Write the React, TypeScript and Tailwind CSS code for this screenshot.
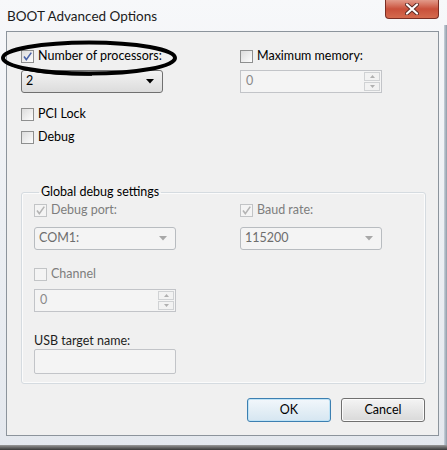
import clsx from "clsx";

const font = "font-['Lato',sans-serif]";

const Check = ({ checked, disabled }: { checked?: boolean; disabled?: boolean }) => (
  <span
    className={clsx(
      "w-[13px] h-[13px] shrink-0 border flex items-center justify-center",
      disabled
        ? "border-[#c2c4c6] bg-[#f4f4f4]"
        : "border-[#8e8f8f] bg-linear-to-br from-[#dcdcdc] to-[#fdfdfd]"
    )}
  >
    {checked && (
      <svg width="11" height="11" viewBox="0 0 11 11">
        <path
          d="M2 5.5 L4.3 8.6 L9.3 1.6"
          fill="none"
          stroke={disabled ? "#b4b4b4" : "#4a64a8"}
          strokeWidth="1.6"
        />
      </svg>
    )}
  </span>
);

const CheckRow = ({
  label,
  checked,
  disabled,
}: {
  label: string;
  checked?: boolean;
  disabled?: boolean;
}) => (
  <div className="flex items-center gap-[4px] h-[13px]">
    <Check checked={checked} disabled={disabled} />
    <span className={clsx("text-[12.5px] leading-none", disabled ? "text-[#7d7d7d]" : "text-black")}>
      {label}
    </span>
  </div>
);

const Combo = ({ value, disabled }: { value: string; disabled?: boolean }) => (
  <div
    className={clsx(
      "w-[142px] h-[23px] rounded-[3px] border flex items-center justify-between pl-[4px] pr-[8px]",
      disabled
        ? "border-[#b8bcc0] bg-[#f4f4f4] text-[#6d6d6d]"
        : "border-[#707070] bg-linear-to-b from-[#f3f3f3] to-[#dcdcdc] text-black"
    )}
  >
    <span className="text-[12.5px] leading-none">{value}</span>
    <svg width="8" height="5" viewBox="0 0 8 5">
      <path d="M0 0 H8 L4 4.5 Z" fill={disabled ? "#a8a8a8" : "#000"} />
    </svg>
  </div>
);

const Spinner = ({ value }: { value: string }) => (
  <div className="w-[142px] h-[23px] border border-[#c2c4c8] bg-[#f4f4f4] flex items-center justify-between pl-[5px] pr-[1px]">
    <span className="text-[12.5px] leading-none text-[#8a8a8a]">{value}</span>
    <div className="flex flex-col gap-[1px]">
      {[0, 1].map((i) => (
        <div
          key={i}
          className="w-[16px] h-[9px] border border-[#d0d2d4] bg-[#f2f2f2] flex items-center justify-center"
        >
          <svg width="5" height="3" viewBox="0 0 5 3">
            <path d={i === 0 ? "M0 3 H5 L2.5 0 Z" : "M0 0 H5 L2.5 3 Z"} fill="#b0b0b0" />
          </svg>
        </div>
      ))}
    </div>
  </div>
);

const Button = ({ label, focused }: { label: string; focused?: boolean }) => (
  <div
    className={clsx(
      "w-[84px] h-[24px] rounded-[3px] border flex items-center justify-center text-[12.5px] text-black",
      focused
        ? "border-[#3c7fb1] bg-linear-to-b from-[#f2f7fb] to-[#d6e6f1] shadow-[inset_0_0_0_1px_#bfe3f6]"
        : "border-[#707070] bg-linear-to-b from-[#f4f4f4] to-[#d9d9d9] shadow-[inset_0_0_0_1px_#fbfbfb]"
    )}
  >
    {label}
  </div>
);

export default function App() {
  return (
    <div
      className={clsx(
        "relative w-[447px] h-[450px] bg-linear-to-b from-[#f7f8fa] via-[#eceff3] to-[#e4e8ee] flex flex-col",
        font
      )}
    >
      {/* title bar */}
      <div className="h-[31px] flex items-start justify-between pl-[7px] pr-[8px]">
        <span className="mt-[6px] text-[13.5px] text-[#1b1b1b]">BOOT Advanced Options</span>
        <div className="w-[54px] h-[19px] rounded-b-[4px] border border-t-0 border-[#7a2e24] bg-linear-to-b from-[#e29a8a] via-[#c9503b] to-[#d46a4e] flex items-center justify-center">
          <svg width="14" height="12" viewBox="0 0 14 12">
            <path d="M2 1.5 L12 10.5 M12 1.5 L2 10.5" stroke="#5a2a24" strokeWidth="4" strokeLinecap="round" />
            <path d="M2 1.5 L12 10.5 M12 1.5 L2 10.5" stroke="#fff" strokeWidth="2.2" strokeLinecap="round" />
          </svg>
        </div>
      </div>

      {/* client area */}
      <div className="ml-[6px] w-[433px] h-[405px] border border-[#8c949c] bg-[#f0f0f0] pl-[14px] pt-[18px]">
        <div className="flex">
          <div className="w-[219px] flex flex-col">
            <CheckRow label="Number of processors:" checked />
            <div className="mt-[7px]">
              <Combo value="2" />
            </div>
            <div className="mt-[15px] flex flex-col gap-[10px]">
              <CheckRow label="PCI Lock" />
              <CheckRow label="Debug" />
            </div>
          </div>
          <div className="flex flex-col">
            <CheckRow label="Maximum memory:" />
            <div className="mt-[7px]">
              <Spinner value="0" />
            </div>
          </div>
        </div>

        <fieldset className="mt-[41px] w-[405px] h-[199px] border border-[#d5dbe0] rounded-[3px] pl-[12px] shadow-[inset_0_0_0_1px_#fbfbfb]">
          <legend className="ml-[5px] px-[2px] text-[12.5px] leading-[14px] text-black">
            Global debug settings
          </legend>
          <div className="mt-[5px] flex">
            <div className="w-[206px] flex flex-col">
              <CheckRow label="Debug port:" checked disabled />
              <div className="mt-[10px]">
                <Combo value="COM1:" disabled />
              </div>
              <div className="mt-[18px]">
                <CheckRow label="Channel" disabled />
              </div>
              <div className="mt-[8px]">
                <Spinner value="0" />
              </div>
              <span className="mt-[22px] text-[12.5px] leading-[14px] text-[#1e1e1e]">USB target name:</span>
              <div className="mt-[1px] w-[142px] h-[25px] rounded-[2px] border border-[#c2c4c8] bg-[#f4f4f4]" />
            </div>
            <div className="flex flex-col">
              <CheckRow label="Baud rate:" checked disabled />
              <div className="mt-[10px]">
                <Combo value="115200" disabled />
              </div>
            </div>
          </div>
        </fieldset>

        <div className="mt-[14px] w-[404px] flex justify-end gap-[10px]">
          <Button label="OK" focused />
          <Button label="Cancel" />
        </div>
      </div>

      <div className="mt-auto h-[5px] bg-linear-to-b from-[#9a9a9a] to-[#3a3a3a]" />
      <div className="absolute right-0 top-[25px] bottom-[5px] w-[3px] bg-linear-to-r from-[#c8d2dc] to-[#8f9aa6]" />

      {/* hand-drawn marker circle around the first option */}
      <svg className="absolute left-0 top-[40px]" width="182" height="38" viewBox="0 0 182 38">
        <ellipse cx="89" cy="18" rx="86" ry="15.5" fill="none" stroke="#000" strokeWidth="4" />
        <path d="M8 23 Q30 35 92 34.5" fill="none" stroke="#000" strokeWidth="2.5" />
      </svg>
    </div>
  );
}
